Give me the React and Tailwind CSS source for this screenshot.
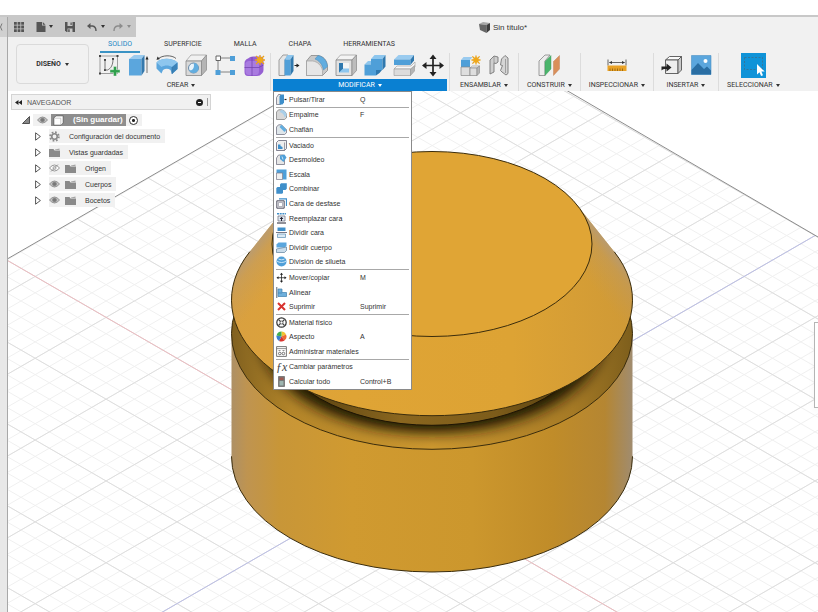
import React from "react";

/* ---------- small shared pieces ---------- */

const Caret = ({ className = "text-[#333]" }) => (
  <svg viewBox="0 0 4 3" className={`w-1 h-[3px] shrink-0 ${className}`} aria-hidden="true">
    <path d="M0 0h4L2 3z" fill="currentColor" />
  </svg>
);

const Svg = ({ children, box = 24, className = "w-6 h-6" }) => (
  <svg viewBox={`0 0 ${box} ${box}`} className={`${className} shrink-0`} fill="none" aria-hidden="true">
    {children}
  </svg>
);

const Spark = ({ x, y, r = 4 }) => (
  <g transform={`translate(${x} ${y})`}>
    <path
      d={`M0 ${-r}V${r}M${-r} 0H${r}M${-r * 0.8} ${-r * 0.8}L${r * 0.8} ${r * 0.8}M${r * 0.8} ${-r * 0.8}L${-r * 0.8} ${r * 0.8}`}
      stroke="#e8a21c"
      strokeWidth="1.3"
    />
    <circle r={r * 0.6} fill="#f0a818" />
  </g>
);

/* ---------- ribbon icons ---------- */

const SketchIcon = () => (
  <Svg>
    <path d="M3 3h17.500v17.500H3z" stroke="#888" strokeWidth="0.8" />
    <path d="M2 2h2v2H2zM19.500 2h2v2h-2zM2 19.500h2v2H2zM7 6h2v2H7zM7 16h2v2H7zM15 5h2v2h-2z" fill="#444" />
    <path d="M8 7v10h2.500C14 15.500 16 12 16 6" stroke="#666" strokeWidth="0.9" />
    <path d="M16.500 13.500h3v3.200h3.500v3h-3.500V23h-3v-3.300H13v-3h3.500z" fill="#2fa04c" stroke="#f2f2f2" strokeWidth="0.4" />
  </Svg>
);

const ExtrudeIcon = () => (
  <Svg>
    <path d="M3 6l5-4h10.500l-3 4z" fill="#9acbef" />
    <path d="M3 6h12.500v16.500H3z" fill="#5ba6dd" />
    <path d="M15.500 6l3-4v16l-3 4.500z" fill="#3579ad" />
    <path d="M21 20V5" stroke="#555" strokeWidth="0.8" />
    <path d="M19.500 6.500L21 3l1.500 3.500z" fill="#222" />
  </Svg>
);

const RevolveIcon = () => (
  <Svg>
    <path d="M1.500 9.500C6 4.500 17 4.500 22.500 9.500v6.500l-5.500 5-1.500-4c-2.500-1.600-5-1.600-7.500 0l-1.500 3.500-5-5z" fill="#5ba6dd" />
    <path d="M1.500 9.500C6 4.500 17 4.500 22.500 9.500L17 14c-3-2-7.500-2-10.500 0z" fill="#8dc6ee" />
    <path d="M17 14l5.500-4.500V16L17 21z" fill="#3b82b8" />
    <path d="M3 6c4-4 14-4.300 18-.5" stroke="#555" strokeWidth="0.9" />
    <path d="M1.500 7l1-3.500L5 6z" fill="#333" />
    <path d="M17 14v7" stroke="#34719e" strokeWidth="0.6" />
  </Svg>
);

const HoleIcon = () => (
  <Svg>
    <path d="M2 8l5-6h15.500l-5 6z" fill="#f1f1f1" stroke="#999" strokeWidth="0.7" />
    <path d="M2 8h15.500v14.500H2z" fill="#d9d9d9" stroke="#888" strokeWidth="0.8" />
    <path d="M17.500 8l5-6v15l-5 5.500z" fill="#b5b5b5" stroke="#888" strokeWidth="0.7" />
    <circle cx="9.500" cy="15" r="5" fill="#e8f3fb" stroke="#5b7fa0" strokeWidth="0.9" />
    <path d="M9.500 10a5 5 0 1 1-4.500 7.200c4 1 6-3.500 4.500-7.200z" fill="#62addf" />
  </Svg>
);

const PatternIcon = () => (
  <Svg>
    <path d="M5 5h14M5 5v14h14" stroke="#777" strokeWidth="0.9" />
    <path d="M3 3h4.500v4.500H3z" fill="#fff" stroke="#555" strokeWidth="0.9" />
    <path d="M17 3h5v5h-5zM2.500 17h5v5h-5zM17 17h5v5h-5z" fill="#4f9fd8" />
  </Svg>
);

const FormIcon = () => (
  <Svg>
    <path d="M6 5.500Q8 3.500 11 3.500h7q3.500 0 3.500 3.500v10q0 2-1.500 3.500Q18 23 15 23H6q-3.500 0-3.500-4V10q0-3 3.500-4.500z" fill="#9560d2" />
    <path d="M3.500 10.500Q4 8 7 8h7q3 0 3 3v7q0 4-3 4H7q-3.500 0-3.500-4z" fill="#a97be0" />
    <path d="M10 4v19M2.500 14.500h14.500l4.500-2.500M17 9l4-3" stroke="#6d3fa9" strokeWidth="0.7" />
    <Spark x={18} y={7} r={5} />
  </Svg>
);

const PressPullIcon = () => (
  <Svg>
    <path d="M3 7l4-5h5L9 7v15.500H3z" fill="#e6e6e6" stroke="#888" strokeWidth="0.8" />
    <path d="M8.500 6.500l3-4.500h6l-3 4.500z" fill="#8dc6ee" />
    <path d="M8.500 6.500h6V22.500h-6z" fill="#4f9fd8" />
    <path d="M14.500 6.500l3-4.500v16l-3 4.500z" fill="#2f78ae" />
    <path d="M18.500 12.500h3" stroke="#222" strokeWidth="1" />
    <path d="M20.500 10.500l3 2-3 2z" fill="#222" />
  </Svg>
);

const FilletIcon = () => (
  <Svg>
    <path d="M1.500 8l4.500-5.500h7c6 1 9 5 9.500 11v4l-5 5h-16z" fill="#c9c9c9" stroke="#888" strokeWidth="0.8" />
    <path d="M1.500 8h6c5 .5 9 4.500 10 9.500v5h-16z" fill="#e6e6e6" stroke="#999" strokeWidth="0.6" />
    <path d="M10 6l3-3.500c5 .8 9 5 9.500 11l-4 3.500C17.500 11.500 14 7.500 10 6z" fill="#62addf" stroke="#4788b8" strokeWidth="0.5" />
  </Svg>
);

const ShellIcon = () => (
  <Svg>
    <path d="M2 7l4.500-5h16l-4.500 5z" fill="#f4f4f4" stroke="#999" strokeWidth="0.7" />
    <path d="M2 7h16v15.500H2z" fill="#e2e2e2" stroke="#888" strokeWidth="0.8" />
    <path d="M18 7l4.500-5v15.500L18 22.500z" fill="#bdbdbd" stroke="#888" strokeWidth="0.7" />
    <path d="M5 10h10v9.500H5z" fill="#8dc6ee" />
    <path d="M5 10h4v5.500l-4 4z" fill="#2f78ae" />
    <path d="M9 10h6v5.500H9z" fill="#f5f5f5" />
  </Svg>
);

const CombineIcon = () => (
  <Svg>
    <path d="M8 6l3.500-4h11L19.500 6zM1.500 11.500L5 8h3v3.500z" fill="#8dc6ee" />
    <path d="M8 6h11.500v11H13v5.500H1.500v-11H8z" fill="#4f9fd8" />
    <path d="M19.500 6l3-4v11.500l-3 3.500zM13 17h6l-2.500 3-3.500 2.500z" fill="#2f78ae" />
  </Svg>
);

const SplitIcon = () => (
  <Svg>
    <path d="M2 6.500l4.500-4.500h15.500l-3.500 4.500z" fill="#9acbef" />
    <path d="M2 6.500h16.500V12H2z" fill="#4f9fd8" />
    <path d="M18.500 6.500L22 2v5.500L18.500 12z" fill="#2f78ae" />
    <path d="M2 16l3-3h14l4-4v5l-4.500 2z" fill="#f8f8f8" stroke="#999" strokeWidth="0.6" />
    <path d="M2 16h16.500v6.500H2z" fill="#dcdcdc" stroke="#999" strokeWidth="0.6" />
    <path d="M18.500 16l4-3.500V18l-4 4.500z" fill="#b5b5b5" stroke="#999" strokeWidth="0.6" />
  </Svg>
);

const MovePath = () => (
  <>
    <path d="M12 4v17M3.500 12.500h17" stroke="#222" strokeWidth="1.700" />
    <path d="M12 1.500l3.500 4.500h-7zM12 23.500L8.500 19h7zM1 12.500L5.500 9v7zM23 12.500L18.500 9v7z" fill="#222" />
  </>
);

const MoveIcon = () => (
  <Svg>
    <MovePath />
  </Svg>
);

const ComponentIcon = () => (
  <Svg>
    <path d="M3 7l2.500-3h9L12 7z" fill="#9acbef" />
    <path d="M3 7h9v7H3z" fill="#4f9fd8" />
    <path d="M3 14h9v8.500H3z" fill="#dedede" stroke="#888" strokeWidth="0.7" />
    <path d="M12 15l2.500-2h7L19 15z" fill="#f4f4f4" stroke="#888" strokeWidth="0.6" />
    <path d="M12 15h7v7.500h-7z" fill="#dedede" stroke="#888" strokeWidth="0.7" />
    <path d="M19 15l2.500-2v7L19 22.500z" fill="#b5b5b5" stroke="#888" strokeWidth="0.6" />
    <Spark x={18} y={7} r={4.5} />
  </Svg>
);

const JointIcon = () => (
  <Svg>
    <path d="M3 7l4-4 4 1v5l-2 1.500-2-.5v9l-4 2z" fill="#cfcfcf" stroke="#777" strokeWidth="0.9" />
    <path d="M7 3v7" stroke="#888" strokeWidth="0.7" />
    <path d="M21 5l-3-2.500-3.500 3.500-1 6 2 .500-2 5 1.500 1.500 4 3 2-1.500z" fill="#d5d5d5" stroke="#777" strokeWidth="0.9" />
    <path d="M18.500 6v14" stroke="#888" strokeWidth="0.7" />
  </Svg>
);

const PlaneIcon = () => (
  <Svg>
    <path d="M2 8l6-6h5l-5 6v14.500H2z" fill="#ececec" stroke="#888" strokeWidth="0.8" />
    <path d="M8 8.500l6-6V16l-6 6.500z" fill="#4ab56b" stroke="#3b8f55" strokeWidth="0.4" />
    <path d="M16.500 8.500l6-6V16l-6 6.500z" fill="#d98f5a" stroke="#b8744a" strokeWidth="0.4" />
  </Svg>
);

const MeasureIcon = () => (
  <Svg>
    <path d="M3 6.500v6M21 6.500v6M4.500 9.500h15" stroke="#555" strokeWidth="0.9" />
    <path d="M4 9.500L7 8v3zM20 9.500L17 8v3z" fill="#333" />
    <path d="M2.500 12.500h19V18h-19z" fill="#e9a227" />
    <path d="M5 18v-2.500M7.500 18v-2.500M10 18v-2.500M12.500 18v-2.500M15 18v-2.500M17.500 18v-2.500" stroke="#8a5d10" strokeWidth="0.8" />
  </Svg>
);

const InsertIcon = () => (
  <Svg>
    <path d="M5.500 7l4-3.500h12l-3.500 3.500z" fill="#fafafa" stroke="#555" strokeWidth="0.9" />
    <path d="M5.500 7H18v13.500H5.500z" fill="#eee" stroke="#555" strokeWidth="0.9" />
    <path d="M18 7l3.500-3.500V17L18 20.500z" fill="#c9c9c9" stroke="#555" strokeWidth="0.9" />
    <path d="M1.500 13.500h5V10.500l5 4-5 4v-2.500c-2-.2-3.500.2-5 1.500z" fill="#222" />
  </Svg>
);

const CanvasIcon = () => (
  <Svg>
    <path d="M2.500 2.500h19.500v19H2.500z" fill="#5ba6dd" stroke="#4a90c4" strokeWidth="0.6" />
    <path d="M2.500 17l6.500-7 6 6 3-2.500 4 4v4H2.500z" fill="#2a6ea3" />
    <circle cx="16.500" cy="8" r="2" fill="#fff" />
  </Svg>
);

const SelectIcon = () => (
  <Svg box={25} className="w-[25px] h-[25px]">
    <path d="M0 0h25v25H0z" fill="#0f93d8" />
    <path d="M3.500 4.500h18v12M3.500 4.500v12h12" stroke="#3c6f8c" strokeWidth="0.8" strokeDasharray="2 1.5" />
    <path d="M16 11v10.500l2.500-2.200 1.600 3.700 1.900-.8-1.600-3.600h3.300z" fill="#fff" />
  </Svg>
);

/* ---------- menu icons, drawn on an 11 unit box ---------- */

const Mini = ({ children }) => (
  <Svg box={11} className="w-[11px] h-[11px]">
    {children}
  </Svg>
);

const menuIcons = {
  press: (
    <Mini>
      <path d="M.5 3.500l2-3h2v10h-4z" fill="#e8e8e8" stroke="#667" strokeWidth="0.7" />
      <path d="M3.500 2.500L5 .5h3v8l-1.500 2h-3z" fill="#3f8fca" />
      <path d="M8.500 5.500h2" stroke="#222" strokeWidth="1.200" />
    </Mini>
  ),
  fillet: (
    <Mini>
      <path d="M.5 3L2.500.8h3c3 .5 5 2.700 5 6v2l-2 1.700h-8z" fill="#d8d8d8" stroke="#777" strokeWidth="0.7" />
      <path d="M3.500 3L5.500.8c3 .5 5 2.700 5 6l-2 1.500C8 5.500 6.500 3.500 3.500 3z" fill="#a9cfe9" />
    </Mini>
  ),
  chamfer: (
    <Mini>
      <path d="M.5 3L2.500.8h3l5 5v3l-2 1.700h-8z" fill="#dfe6ea" stroke="#667" strokeWidth="0.7" />
      <path d="M3.500 3l2-2.200 5 5-2 2.200z" fill="#62addf" />
    </Mini>
  ),
  shell: (
    <Mini>
      <path d="M.5 2.500l2-2h8v8l-2 2h-8z" fill="#eee" stroke="#667" strokeWidth="0.8" />
      <path d="M2 4.500h2.500V6L6.500 7v2H2z" fill="#3f8fca" />
      <path d="M8.500 2.500v8" stroke="#667" strokeWidth="0.6" />
    </Mini>
  ),
  draft: (
    <Mini>
      <path d="M.5 4l2-3h5l1 3v6.500h-8z" fill="#e6e6e6" stroke="#667" strokeWidth="0.7" />
      <path d="M4 1.500L8.500.500l2 3-3 4.500L4 5z" fill="#4f9fd8" />
      <path d="M6 2.500l1 3" stroke="#fff" strokeWidth="0.7" />
    </Mini>
  ),
  scale: (
    <Mini>
      <path d="M.5.5h10v10h-4V4.500h-6z" fill="#4f9fd8" />
      <path d="M.5 4h6v6.500h-6z" fill="#f0f0f0" stroke="#778" strokeWidth="0.7" />
    </Mini>
  ),
  combine: (
    <Mini>
      <path d="M4 1.500L5 .3h5.800v5.500L9.500 7H7v3l-1 .8H.3V5L1.500 4H4z" fill="#3f8fca" />
    </Mini>
  ),
  offset: (
    <Mini>
      <path d="M3 .8h7.500V8" stroke="#3f8fca" strokeWidth="1.200" />
      <path d="M.8 2.800h7.400v7.400H.8z" fill="#e8e8e8" stroke="#556" strokeWidth="1" />
      <path d="M2.500 4.500h4v4h-4z" fill="#fff" stroke="#889" strokeWidth="0.6" />
    </Mini>
  ),
  replace: (
    <Mini>
      <path d="M1 .8h9" stroke="#3f8fca" strokeWidth="1.400" strokeDasharray="2 .7" />
      <path d="M2 3h7v5H2z" fill="#e3eef6" stroke="#667" strokeWidth="0.7" />
      <path d="M5.500 8V4.500M4 6l1.500-1.800L7 6M1 10h9" stroke="#223" strokeWidth="1" />
    </Mini>
  ),
  splitFace: (
    <Mini>
      <path d="M1.500.5h8v3.500h-8z" fill="#3f8fca" />
      <path d="M0 5.500h11" stroke="#556" strokeWidth="0.8" />
      <path d="M1.500 7h8v3.500h-8z" fill="#dceaf4" stroke="#5c8fb5" strokeWidth="0.7" />
    </Mini>
  ),
  splitBody: (
    <Mini>
      <path d="M.5 2.500l2-2h8V4l-2 1.500h-8z" fill="#5ba6dd" />
      <path d="M.5 7l10-2v3.500l-2 2h-8z" fill="#c9dceb" stroke="#5c7f9c" strokeWidth="0.7" />
    </Mini>
  ),
  silhouette: (
    <Mini>
      <circle cx="5.500" cy="5.500" r="5" fill="#4f9fd8" />
      <path d="M.8 5c2.500 2 7 2 9.400 0M2.500 3c2 1 4 1 6 0" stroke="#d8ecf9" strokeWidth="0.9" />
    </Mini>
  ),
  move: (
    <Svg className="w-[11px] h-[11px]">
      <MovePath />
    </Svg>
  ),
  align: (
    <Mini>
      <path d="M.8 0v11" stroke="#456" strokeWidth="0.9" />
      <path d="M2 2h4v3.500h4.500V9.500H2z" fill="#6fb0dc" stroke="#3f7fae" strokeWidth="0.7" />
      <path d="M2 6h4" stroke="#3f7fae" strokeWidth="0.7" />
    </Mini>
  ),
  remove: (
    <Mini>
      <path d="M2 2l7 7M9 2L2 9" stroke="#d8322e" strokeWidth="2" />
    </Mini>
  ),
  material: (
    <Mini>
      <circle cx="5.500" cy="5.500" r="4.700" fill="#fff" stroke="#333" strokeWidth="1.200" />
      <path d="M2.500 2.500l6 6M8.500 2.500l-6 6" stroke="#444" strokeWidth="1.100" />
      <circle cx="5.500" cy="5.500" r="1.500" fill="#fff" stroke="#444" strokeWidth="0.7" />
    </Mini>
  ),
  look: (
    <Mini>
      <path d="M5.500 5.500V.5A5 5 0 0 1 10 3.500z" fill="#f0c330" />
      <path d="M5.500 5.500L10 3.500a5 5 0 0 1-1.500 6z" fill="#ee6b2f" />
      <path d="M5.500 5.500l3 4a5 5 0 0 1-5.500.4z" fill="#d8332f" />
      <path d="M5.500 5.500L3 9.900A5 5 0 0 1 .6 4.500z" fill="#3a7fd0" />
      <path d="M5.500 5.500L.6 4.500A5 5 0 0 1 5.500.5z" fill="#43ad4f" />
    </Mini>
  ),
  manage: (
    <Mini>
      <path d="M.6.6h9.800v9.800H.6z" fill="#fff" stroke="#555" strokeWidth="0.8" />
      <path d="M.6 2.600h9.800" stroke="#777" strokeWidth="0.8" />
      <circle cx="3.800" cy="7.500" r="1.300" stroke="#555" strokeWidth="0.8" />
      <circle cx="7.400" cy="7.500" r="1.300" stroke="#555" strokeWidth="0.8" />
      <path d="M2.500 4.500h2M6.500 4.500h2" stroke="#777" strokeWidth="0.8" />
    </Mini>
  ),
  params: (
    <span className="w-[11px] font-['Liberation_Serif',serif] italic text-[12px] leading-none text-[#444]">ƒx</span>
  ),
  compute: (
    <Mini>
      <path d="M2.500.5h6v10h-6z" fill="#777" stroke="#555" strokeWidth="0.6" />
      <path d="M3.500 1.500h4V4h-4z" fill="#a05a50" />
      <path d="M3.500 5h4v4.500h-4z" fill="#9db5b0" />
    </Mini>
  ),
};

const menuGroups = [
  [{ icon: "press", label: "Pulsar/Tirar", keys: "Q" }],
  [
    { icon: "fillet", label: "Empalme", keys: "F" },
    { icon: "chamfer", label: "Chaflán" },
  ],
  [
    { icon: "shell", label: "Vaciado" },
    { icon: "draft", label: "Desmoldeo" },
    { icon: "scale", label: "Escala" },
    { icon: "combine", label: "Combinar" },
    { icon: "offset", label: "Cara de desfase" },
    { icon: "replace", label: "Reemplazar cara" },
    { icon: "splitFace", label: "Dividir cara" },
    { icon: "splitBody", label: "Dividir cuerpo" },
    { icon: "silhouette", label: "División de silueta" },
  ],
  [
    { icon: "move", label: "Mover/copiar", keys: "M" },
    { icon: "align", label: "Alinear" },
    { icon: "remove", label: "Suprimir", keys: "Suprimir" },
  ],
  [
    { icon: "material", label: "Material físico" },
    { icon: "look", label: "Aspecto", keys: "A" },
    { icon: "manage", label: "Administrar materiales" },
  ],
  [
    { icon: "params", label: "Cambiar parámetros" },
    { icon: "compute", label: "Calcular todo", keys: "Control+B" },
  ],
];

const ModifyMenu = () => (
  <div
    role="menu"
    className="absolute left-0 top-full z-20 w-[139px] h-[299px] flex flex-col bg-white border border-[#8a8a8a] px-[2px] font-['Liberation_Sans',Arial,sans-serif]"
  >
    {menuGroups.map((group, i) => (
      <React.Fragment key={i}>
        {i > 0 && <div role="separator" className="h-px shrink-0 bg-[#a8a8a8]" />}
        {group.map((item) => (
          <button
            key={item.label}
            role="menuitem"
            className="flex-1 min-h-0 grid grid-cols-[11px_69px_1fr] gap-x-[2px] items-center text-left text-[7px] leading-none text-[#333] whitespace-nowrap hover:bg-[#d9ecf8]"
          >
            {menuIcons[item.icon]}
            <span>{item.label}</span>
            <span>{item.keys}</span>
          </button>
        ))}
      </React.Fragment>
    ))}
  </div>
);

/* ---------- ribbon ---------- */

const groups = [
  {
    name: "CREAR",
    icons: [SketchIcon, ExtrudeIcon, RevolveIcon, HoleIcon, PatternIcon, FormIcon],
    className: "pr-[2px]",
  },
  {
    name: "MODIFICAR",
    icons: [PressPullIcon, FilletIcon, ShellIcon, CombineIcon, SplitIcon, MoveIcon],
    className: "border-l border-[#dcdcdc] px-[2px]",
    open: true,
  },
  { name: "ENSAMBLAR", icons: [ComponentIcon, JointIcon], className: "border-l border-[#dcdcdc] px-[5px]" },
  { name: "CONSTRUIR", icons: [PlaneIcon], className: "border-l border-[#dcdcdc] px-[6px]" },
  { name: "INSPECCIONAR", icons: [MeasureIcon], className: "border-l border-[#dcdcdc] px-[6px]" },
  { name: "INSERTAR", icons: [InsertIcon, CanvasIcon], className: "border-l border-[#dcdcdc] px-[3px]" },
  { name: "SELECCIONAR", icons: [SelectIcon], className: "border-l border-[#dcdcdc] px-[6px]" },
];

const tabs = ["SOLIDO", "SUPERFICIE", "MALLA", "CHAPA", "HERRAMIENTAS"];

const Ribbon = () => (
  <div className="flex bg-[#f1f1f1] h-[54px] text-[7px] leading-none text-[#333]">
    <button className="ml-2 mt-[7px] w-[73px] h-10 shrink-0 flex items-center justify-center gap-1 border border-[#dadada] rounded-sm font-bold">
      DISEÑO <Caret />
    </button>
    <div className="ml-[5px]">
      <nav className="flex gap-4 h-4 pl-[6px]">
        {tabs.map((tab, i) => (
          <a
            key={tab}
            href="#"
            className={
              i === 0
                ? "px-2 pt-1 text-[#1c86c4] border-b-2 border-[#3a93c4]"
                : "px-2 pt-1"
            }
          >
            {tab}
          </a>
        ))}
      </nav>
      <div className="flex">
        {groups.map((group) => (
          <div key={group.name} className={group.className}>
            <div className="relative">
              <div className="flex justify-center h-[26px]">
                {group.icons.map((Icon, i) => (
                  <button key={i} aria-label={`${group.name} ${i + 1}`} className="w-[29px] h-[25px] flex justify-center">
                    <Icon />
                  </button>
                ))}
              </div>
              <button
                className={
                  group.open
                    ? "w-full h-3 flex items-center justify-center gap-[3px] bg-[#0a80d2] text-white"
                    : "w-full h-3 px-[2px] flex items-center justify-center gap-[3px]"
                }
              >
                {group.name}
                <Caret className={group.open ? "text-white" : "text-[#333]"} />
              </button>
              {group.open && <ModifyMenu />}
            </div>
          </div>
        ))}
      </div>
    </div>
  </div>
);

const TitleBar = () => (
  <div className="flex h-5 bg-[#f1f1f1]">
    <div className="w-32 shrink-0 flex items-center pl-[6px] pb-px bg-[#c8c8c8] text-[#555]">
      <button aria-label="Panel de datos">
        <Svg box={10} className="w-[10px] h-[10px]">
          <path d="M0 0h2.800v2.800H0zM3.600 0h2.800v2.800H3.600zM7.200 0H10v2.800H7.200zM0 3.600h2.800v2.800H0zM3.600 3.600h2.800v2.800H3.600zM7.200 3.600H10v2.800H7.200zM0 7.200h2.800V10H0zM3.600 7.200h2.800V10H3.600zM7.200 7.200H10V10H7.200z" fill="currentColor" />
        </Svg>
      </button>
      <button aria-label="Archivo" className="ml-3 flex items-center gap-[3px]">
        <Svg box={10} className="w-[10px] h-[10px]">
          <path d="M.5 0H6v3.500h3.500V10h-9zM6.800 0l2.700 2.700H6.800z" fill="currentColor" />
        </Svg>
        <Caret />
      </button>
      <button aria-label="Guardar" className="ml-3">
        <Svg box={10} className="w-[10px] h-[10px]">
          <path d="M0 0h10v10H1.500L0 8.500z" fill="currentColor" />
          <path d="M2.500 0h5v4h-5zM2.500 6.500h5V10h-5z" fill="#c8c8c8" />
          <path d="M5.500.5h1.200v2.500H5.500zM3.200 7.200h1.500V10H3.200z" fill="currentColor" />
        </Svg>
      </button>
      <button aria-label="Deshacer" className="ml-3 flex items-center gap-1">
        <Svg box={10} className="w-[10px] h-[10px]">
          <path d="M3.500 1v6L0 4z" fill="currentColor" />
          <path d="M3 4h2.500Q9 4.500 9 9" stroke="currentColor" strokeWidth="1.400" />
        </Svg>
        <Caret />
      </button>
      <button aria-label="Rehacer" className="ml-2 flex items-center gap-1 text-[#8c8c8c]">
        <Svg box={10} className="w-[10px] h-[10px]">
          <path d="M6.500 1v6L10 4z" fill="currentColor" />
          <path d="M7 4H4.500Q1 4.500 1 9" stroke="currentColor" strokeWidth="1.400" />
        </Svg>
        <Caret className="text-[#8c8c8c]" />
      </button>
    </div>
    <div className="flex-1 flex items-center justify-center gap-[3px] pl-[52px] pt-px text-[8px] leading-none text-[#333]">
      <Svg box={11} className="w-[11px] h-[11px]">
        <path d="M0 2L4 0l7 1-3.500 2z" fill="#a8a8a8" />
        <path d="M0 2l7.500 1v8L1 8z" fill="#666" />
        <path d="M7.500 3L11 1v7l-3.500 3z" fill="#3d3d3d" />
      </Svg>
      <h1 className="font-['Liberation_Sans',Arial,sans-serif]">Sin título*</h1>
    </div>
  </div>
);

/* ---------- browser tree ---------- */

const Eye = ({ off }) => (
  <svg viewBox="0 0 11 8" className="w-[11px] h-2 shrink-0" fill="none" aria-hidden="true">
    <path d="M.5 4Q5.500-2 10.500 4Q5.500 10 .5 4z" fill={off ? "#fff" : "#c4c4c4"} stroke="#8c8c8c" strokeWidth="0.9" />
    <circle cx="5.500" cy="4" r={off ? 1.5 : 2} fill={off ? "none" : "#777"} stroke="#8c8c8c" strokeWidth="0.8" />
    {off && <path d="M2 7.500L9 .5" stroke="#8c8c8c" strokeWidth="0.8" />}
  </svg>
);

const Folder = () => (
  <svg viewBox="0 0 11 9" className="w-[11px] h-[9px] shrink-0" aria-hidden="true">
    <path d="M0 1h4.500l1 1.500H11V9H0z" fill="#8a8a8a" />
    <path d="M6 1.500L10.500.5V2H6z" fill="#a5a5a5" />
  </svg>
);

const Gear = () => (
  <svg viewBox="0 0 12 12" className="w-[11px] h-[11px] shrink-0" fill="none" aria-hidden="true">
    <circle cx="6" cy="6" r="4.700" stroke="#8a8a8a" strokeWidth="2" strokeDasharray="1.850 1.850" />
    <circle cx="6" cy="6" r="3" stroke="#8a8a8a" strokeWidth="1.800" />
  </svg>
);

const treeRows = [
  { label: "Configuración del documento", icon: <Gear /> },
  { label: "Vistas guardadas", icon: <Folder /> },
  { label: "Origen", icon: <Folder />, eye: "off" },
  { label: "Cuerpos", icon: <Folder />, eye: "on" },
  { label: "Bocetos", icon: <Folder />, eye: "on" },
];

const Navigator = () => (
  <div className="absolute left-[3px] top-[3px] w-[200px] text-[7px] leading-none text-[#333] font-['Liberation_Sans',Arial,sans-serif]">
    <div className="flex items-center h-4 pl-[3px] pr-[2px] bg-[#f1f1f1] border border-[#d4d4d4]">
      <svg viewBox="0 0 7 5" className="w-[7px] h-[5px]" aria-hidden="true">
        <path d="M3.500 0v5L0 2.500zM7 0v5L3.500 2.500z" fill="#222" />
      </svg>
      <h2 className="ml-[5px] flex-1 text-[#555]">NAVEGADOR</h2>
      <button aria-label="Opciones" className="w-[7px] h-[7px] rounded-full bg-[#222] flex items-center justify-center">
        <span className="w-[3px] h-px bg-white" />
      </button>
      <span className="ml-1 w-px h-2 bg-[#999]" />
    </div>
    <ul className="pt-[2px]">
      <li className="flex items-center h-4 pl-[11px]">
        <svg viewBox="0 0 8 8" className="w-2 h-2" aria-hidden="true">
          <path d="M7.500.5v7h-7z" fill="#888" stroke="#333" strokeWidth="0.8" />
        </svg>
        <div className="ml-[3px] h-3 w-[18px] flex items-center justify-center bg-[#f1f1f1]">
          <Eye />
        </div>
        <div className="flex items-center h-3 gap-[9px] pl-[2px] pr-[3px] bg-[#8e8e8e] text-white font-bold text-[8px]">
          <svg viewBox="0 0 11 11" className="w-[11px] h-[11px]" fill="#fff" aria-hidden="true">
            <path d="M.8 3L3 .8h7.200V8L8 10.200H.8z" stroke="#555" strokeWidth="0.8" />
            <path d="M1.500 3.200h6.300V10" fill="none" stroke="#aaa" strokeWidth="0.6" />
          </svg>
          (Sin guardar)
        </div>
        <label className="flex h-3 w-4 items-center justify-center bg-[#f1f1f1]">
          <input
            type="radio"
            name="active"
            defaultChecked
            aria-label="Activar componente"
            className="appearance-none w-[9px] h-[9px] rounded-full border border-[#333] bg-white checked:bg-[radial-gradient(#222_25%,white_35%)]"
          />
        </label>
      </li>
      {treeRows.map((row) => (
        <li key={row.label} className="flex items-center h-4 pl-[24px]">
          <svg viewBox="0 0 6 9" className="w-[6px] h-[9px]" fill="#fff" aria-hidden="true">
            <path d="M.6.8v7.400l4.800-3.700z" stroke="#444" strokeWidth="0.9" />
          </svg>
          <div className="ml-[8px] h-[14px] flex items-center pr-[5px] bg-[#f1f1f1]">
            {row.eye && (
              <span className="mr-[5px]">
                <Eye off={row.eye === "off"} />
              </span>
            )}
            {row.icon}
            <span className="ml-[9px]">{row.label}</span>
          </div>
        </li>
      ))}
    </ul>
  </div>
);

/* ---------- 3D canvas ---------- */

const SLOPE = 0.5769;
const STEP = 81.8; // vertical distance between major grid lines
const X0 = -10;
const X1 = 840;

const rising = (c) => `M${X0} ${c - SLOPE * X0}L${X1} ${c - SLOPE * X1}`;
const falling = (d) => `M${X0} ${d + SLOPE * X0}L${X1} ${d + SLOPE * X1}`;

const range = (from, to) => Array.from({ length: to - from + 1 }, (_, i) => from + i);

const minor = range(-2, 50)
  .map((i) => rising(296.75 + (i * STEP) / 5))
  .concat(range(-30, 25).map((i) => falling(256.15 + (i * STEP) / 5)))
  .join("");

const major = range(0, 10)
  .map((i) => rising(296.75 + i * STEP))
  .concat(range(-6, 5).map((i) => falling(256.15 + i * STEP)))
  .join("");

const CONE = "M286.600 205.400L249.800 251.700A200.500 115.700 0 1 0 614.200 251.700L577.400 205.400z";

const Scene = () => (
  <svg
    viewBox="8 91 810 521"
    preserveAspectRatio="xMinYMin slice"
    className="absolute inset-0 w-full h-full"
    fill="none"
    aria-hidden="true"
  >
    <defs>
      <clipPath id="floor">
        <path d="M5.500 260L434 13 860 261.500V640H5.500z" />
      </clipPath>
      <clipPath id="ledge">
        <ellipse cx="432" cy="333.600" rx="200.500" ry="115.700" />
      </clipPath>
      <linearGradient id="body" x1="231" x2="633" y1="0" y2="0" gradientUnits="userSpaceOnUse">
        <stop offset="0" stopColor="#ad9066" />
        <stop offset="0.040" stopColor="#bf9450" />
        <stop offset="0.120" stopColor="#c89638" />
        <stop offset="0.300" stopColor="#d09a30" />
        <stop offset="0.600" stopColor="#cc972d" />
        <stop offset="0.800" stopColor="#c08c29" />
        <stop offset="0.930" stopColor="#b58632" />
        <stop offset="1" stopColor="#a08c70" />
      </linearGradient>
      <linearGradient id="cone" x1="231" x2="633" y1="0" y2="0" gradientUnits="userSpaceOnUse">
        <stop offset="0" stopColor="#d9a040" />
        <stop offset="0.300" stopColor="#dfa435" />
        <stop offset="0.700" stopColor="#dda334" />
        <stop offset="1" stopColor="#cf9936" />
      </linearGradient>
      {/* pale sheen running inwards from the slanted edges */}
      <linearGradient id="rimLeft" x1="264" y1="232" x2="295" y2="257" gradientUnits="userSpaceOnUse">
        <stop offset="0" stopColor="#b09a80" stopOpacity="0.800" />
        <stop offset="0.300" stopColor="#b89a70" stopOpacity="0.400" />
        <stop offset="1" stopColor="#c09a60" stopOpacity="0" />
      </linearGradient>
      <linearGradient id="rimRight" x1="600" y1="232" x2="569" y2="257" gradientUnits="userSpaceOnUse">
        <stop offset="0" stopColor="#b09a80" stopOpacity="0.800" />
        <stop offset="0.300" stopColor="#b89a70" stopOpacity="0.400" />
        <stop offset="1" stopColor="#c09a60" stopOpacity="0" />
      </linearGradient>
      <linearGradient id="ledgeFill" x1="231" x2="633" y1="0" y2="0" gradientUnits="userSpaceOnUse">
        <stop offset="0" stopColor="#80601f" />
        <stop offset="0.150" stopColor="#b38529" />
        <stop offset="0.500" stopColor="#cd982f" />
        <stop offset="0.850" stopColor="#a67a25" />
        <stop offset="1" stopColor="#7d5e1c" />
      </linearGradient>
      <linearGradient id="neck" x1="273" x2="591" y1="0" y2="0" gradientUnits="userSpaceOnUse">
        <stop offset="0.100" stopColor="#5a4210" />
        <stop offset="0.400" stopColor="#8a661f" />
        <stop offset="0.700" stopColor="#7d5c1a" />
        <stop offset="0.900" stopColor="#5a4210" />
      </linearGradient>
      <filter id="soft" x="-20%" y="-20%" width="140%" height="140%">
        <feGaussianBlur stdDeviation="7" />
      </filter>
    </defs>

    <g clipPath="url(#floor)">
      <path d={minor} stroke="#f0f0f0" strokeWidth="1" />
      <path d={major} stroke="#dedede" strokeWidth="1" />
      <path d={falling(256.15)} stroke="#ecbcc0" strokeWidth="1" />
      <path d={rising(296.75 + 5 * STEP)} stroke="#bcbfe6" strokeWidth="1" />
    </g>
    <path d="M5.500 260L434 13 860 261.500" stroke="#8c8c8c" strokeWidth="1" />

    {/* base cylinder */}
    <path
      d="M231.500 333.600V456.300A200.500 115.700 0 0 0 632.500 456.300V333.600A200.500 115.700 0 0 0 231.500 333.600z"
      fill="url(#body)"
    />
    <path d="M231.500 456.300A200.500 115.700 0 0 0 632.500 456.300" stroke="#3a2c0c" strokeWidth="1" />

    {/* groove with its shadow */}
    <g clipPath="url(#ledge)">
      <ellipse cx="432" cy="333.600" rx="200.500" ry="115.700" fill="url(#ledgeFill)" />
      <ellipse cx="432" cy="334" rx="172" ry="99" fill="#1c1402" filter="url(#soft)" />
    </g>
    <ellipse cx="432" cy="333.600" rx="159" ry="91.700" fill="url(#neck)" stroke="#1d1504" strokeWidth="1" />
    <ellipse cx="432" cy="333.600" rx="200.500" ry="115.700" stroke="#3a2c0c" strokeWidth="1" />

    {/* cap */}
    <path d={CONE} fill="url(#cone)" />
    <path d={CONE} fill="url(#rimLeft)" />
    <path d={CONE} fill="url(#rimRight)" />
    <path d="M249.800 251.700A200.500 115.700 0 1 0 614.200 251.700" stroke="#3a2c0c" strokeWidth="1" />
    <ellipse cx="432" cy="244" rx="160" ry="92.500" fill="#e0a535" stroke="#3a2c0c" strokeWidth="1" />
  </svg>
);

export default function App() {
  return (
    <div className="min-h-screen flex flex-col bg-white pt-[15px] font-[Roboto,Arial,sans-serif]">
      <div className="flex-1 flex border-t-2 border-[#c8c8c8]">
        <div className="w-2 shrink-0 bg-[#e8e8e8] border-r border-[#a8a8a8]">
          <div className="h-5 flex items-center bg-[#d0d0d0]">
            <svg viewBox="0 0 3 8" className="w-[3px] h-2" fill="none" aria-hidden="true">
              <path d="M2 .5L.5 4 2 7.500" stroke="#777" />
            </svg>
          </div>
        </div>
        <main className="flex-1 min-w-0 flex flex-col">
          <TitleBar />
          <Ribbon />
          <section className="relative flex-1 overflow-hidden bg-white">
            <Scene />
            <Navigator />
            {/* edge of the docked panel */}
            <div className="absolute right-0 top-[231px] w-1 h-[86px] bg-white border-l border-y border-[#b5b5b5] shadow-md" />
          </section>
        </main>
      </div>
    </div>
  );
}
